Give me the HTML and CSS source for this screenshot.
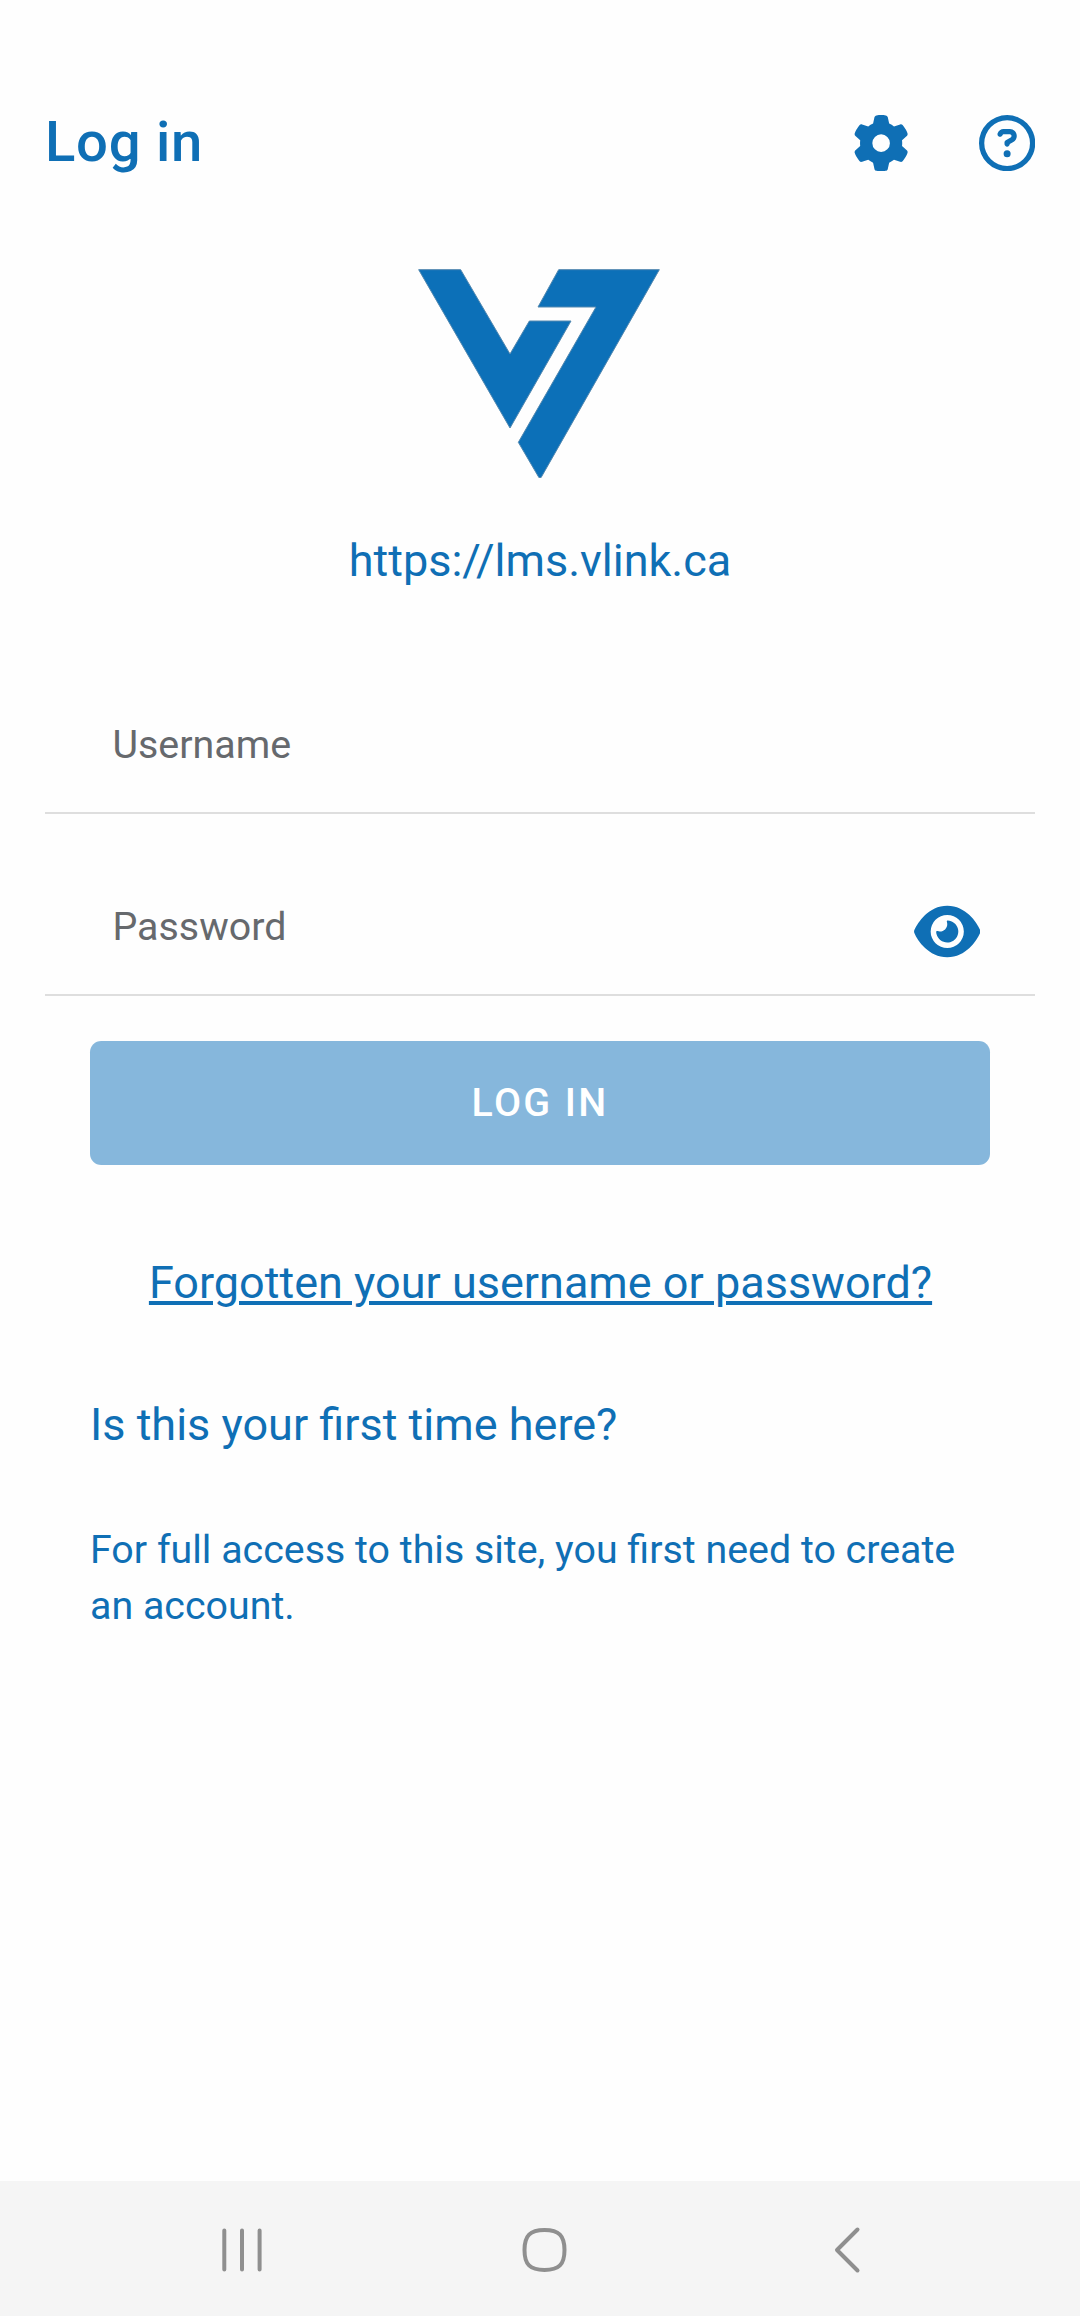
FILE: index.html
```html
<!DOCTYPE html>
<html lang="en">
<head>
<meta charset="utf-8">
<title>Log in</title>
<link rel="stylesheet" href="styles.css">
</head>
<body>
<div class="screen">
  <header class="header">
    <h1 class="title">Log in</h1>
    <div class="actions">
      <svg class="action-icon" viewBox="0 0 512 512" role="img" aria-label="Settings"><path d="M495.9 166.6c3.2 8.7 .5 18.4-6.4 24.6l-43.3 39.4c1.1 8.3 1.7 16.8 1.7 25.4s-.6 17.1-1.7 25.4l43.3 39.4c6.9 6.2 9.6 15.9 6.4 24.6c-4.4 11.9-9.7 23.3-15.8 34.3l-4.7 8.1c-6.6 11-14 21.4-22.1 31.2c-5.9 7.2-15.7 9.6-24.5 6.8l-55.7-17.7c-13.4 10.3-28.2 18.9-44 25.4l-12.5 57.1c-2 9.1-9 16.3-18.2 17.8c-13.8 2.3-28 3.5-42.5 3.5s-28.7-1.2-42.5-3.5c-9.2-1.5-16.2-8.7-18.2-17.8l-12.5-57.1c-15.8-6.5-30.6-15.1-44-25.4L83.1 425.9c-8.8 2.8-18.6 .3-24.5-6.8c-8.1-9.8-15.5-20.2-22.1-31.2l-4.7-8.1c-6.1-11-11.4-22.4-15.8-34.3c-3.2-8.7-.5-18.4 6.4-24.6l43.3-39.4C64.6 273.1 64 264.6 64 256s.6-17.1 1.7-25.4L22.4 191.2c-6.9-6.2-9.6-15.9-6.4-24.6c4.4-11.9 9.7-23.3 15.8-34.3l4.7-8.1c6.6-11 14-21.4 22.1-31.2c5.9-7.2 15.7-9.6 24.5-6.8l55.7 17.7c13.4-10.3 28.2-18.9 44-25.4l12.5-57.1c2-9.1 9-16.3 18.2-17.8C227.3 1.2 241.5 0 256 0s28.7 1.2 42.5 3.5c9.2 1.5 16.2 8.7 18.2 17.8l12.5 57.1c15.8 6.5 30.6 15.1 44 25.4l55.7-17.7c8.8-2.8 18.6-.3 24.5 6.8c8.1 9.8 15.5 20.2 22.1 31.2l4.7 8.1c6.1 11 11.4 22.4 15.8 34.3zM256 336a80 80 0 1 0 0-160 80 80 0 1 0 0 160z"/></svg>
      <svg class="action-icon" viewBox="0 0 512 512" role="img" aria-label="Help"><path d="M464 256A208 208 0 1 0 48 256a208 208 0 1 0 416 0zM0 256a256 256 0 1 1 512 0A256 256 0 1 1 0 256zm169.8-90.7c7.9-22.3 29.1-37.3 52.8-37.3h58.3c34.9 0 63.1 28.3 63.1 63.1c0 22.6-12.1 43.5-31.7 54.8L280 264.4c-.2 13-10.9 23.6-24 23.6c-13.3 0-24-10.7-24-24V250.5c0-8.6 4.6-16.5 12.1-20.8l44.3-25.4c4.7-2.7 7.6-7.7 7.6-13.1c0-8.4-6.8-15.1-15.1-15.1H222.6c-3.4 0-6.4 2.1-7.5 5.3l-.4 1.2c-4.4 12.5-18.2 19-30.6 14.6s-19-18.2-14.6-30.6l.4-1.2zM224 352a32 32 0 1 1 64 0 32 32 0 1 1 -64 0z"/></svg>
    </div>
  </header>

  <main class="content">
    <svg class="logo" viewBox="54 57 726 627" role="img" aria-label="Vlink">
      <path d="M56 59H182L330 312L388 213H513L330 534Z"/>
      <path d="M476 59H778L423 683H417L355 577L588 171H414Z"/>
    </svg>
    <p class="site-url">https://lms.vlink.ca</p>

    <form class="form">
      <div class="field"><span class="placeholder">Username</span></div>
      <div class="field">
        <span class="placeholder">Password</span>
        <svg class="eye" viewBox="0 0 576 512" role="img" aria-label="Show password"><path d="M288 32c-80.8 0-145.5 36.8-192.6 80.6C48.6 156 17.3 208 2.5 243.7c-3.3 7.9-3.3 16.7 0 24.6C17.3 304 48.6 356 95.4 399.4C142.5 443.2 207.2 480 288 480s145.5-36.8 192.6-80.6c46.8-43.5 78.1-95.4 93-131.1c3.3-7.9 3.3-16.7 0-24.6c-14.9-35.7-46.2-87.7-93-131.1C433.5 68.8 368.8 32 288 32zM144 256a144 144 0 1 1 288 0 144 144 0 1 1 -288 0zm144-64c0 35.3-28.7 64-64 64c-7.1 0-13.9-1.2-20.3-3.3c-5.5-1.8-11.9 1.6-11.7 7.4c.3 6.9 1.3 13.8 3.2 20.7c13.7 51.2 66.4 81.6 117.6 67.9s81.6-66.4 67.9-117.6c-11.1-41.5-47.8-69.4-88.6-71.1c-5.8-.2-9.2 6.1-7.4 11.7c2.1 6.4 3.3 13.2 3.3 20.3z"/></svg>
      </div>
      <button class="submit" type="button">LOG IN</button>
    </form>

    <a class="forgot">Forgotten your username or password?</a>
    <section class="signup">
      <h2 class="signup-title">Is this your first time here?</h2>
      <p class="signup-text">For full access to this site, you first need to create an account.</p>
    </section>
  </main>

  <nav class="navbar">
    <svg class="nav-icon" viewBox="0 0 48 48"><path d="M6.3 4.5V43.5M24 4.5V43.5M41.6 4.5V43.5"/></svg>
    <svg class="nav-icon" viewBox="0 0 48 48"><path d="M23.500 4C38 4 43.500 9.500 43.500 24S38 44 23.500 44S3.500 38.500 3.500 24S9 4 23.500 4Z"/></svg>
    <svg class="nav-icon" viewBox="0 0 48 48"><path d="M34.500 3.500L14 24L34.500 44.500"/></svg>
  </nav>
</div>
</body>
</html>
```
FILE: styles.css
```css
* {
  box-sizing: border-box;
}

body {
  margin: 0;
  background: #fefefe;
  color: #0f6fb5;
  font-family: Roboto, "Liberation Sans", sans-serif;
}

h1, h2, p {
  margin: 0;
  font-weight: 400;
}

svg {
  display: block;
  flex: none;
}

.screen {
  display: flex;
  flex-direction: column;
  width: 1080px;
  height: 2316px;
}

.header {
  display: flex;
  align-items: center;
  justify-content: space-between;
  height: 202px;
  padding: 84px 45px 0;
}

.title {
  padding-bottom: 2px;
  font-size: 56.25px;
  font-weight: 500;
  line-height: 68px;
  letter-spacing: 0.7px;
}

.actions {
  display: flex;
  gap: 69.5px;
}

.action-icon {
  width: 56.25px;
  height: 56.25px;
  fill: currentColor;
}

.content {
  display: flex;
  flex: 1;
  flex-direction: column;
  align-items: center;
  padding-top: 67px;
}

.logo {
  width: 242px;
  height: 209px;
  margin-right: 2px;
  fill: #0c70b8;
  stroke: #5288b0;
  stroke-width: 3;
}

.site-url {
  margin-top: 56px;
  font-size: 45px;
  line-height: 54px;
}

.form {
  display: flex;
  flex-direction: column;
  width: 990px;
  margin-top: 44px;
}

.field {
  display: flex;
  align-items: flex-start;
  justify-content: space-between;
  height: 182px;
  padding: 85px 55px 0 67.5px;
  border-bottom: 2px solid #dedede;
}

.placeholder {
  color: #66696d;
  font-size: 39.375px;
  line-height: 56px;
}

.eye {
  width: 66.5px;
  height: 59px;
  margin-top: 3px;
  fill: currentColor;
}

.submit {
  height: 124px;
  margin: 45px 45px 0;
  padding: 0 0 2px;
  border: 0;
  border-radius: 11.25px;
  background: #86b7dc;
  color: #fff;
  font-family: inherit;
  font-size: 39.375px;
  font-weight: 500;
  letter-spacing: 2.36px;
}

.forgot {
  margin-top: 91px;
  padding-left: 1px;
  font-size: 45px;
  line-height: 54px;
  text-decoration: underline;
  text-decoration-thickness: 4px;
  text-underline-offset: 3px;
}

.signup {
  width: 900px;
  margin-top: 88px;
}

.signup-title {
  font-size: 45px;
  line-height: 54px;
}

.signup-text {
  margin-top: 70px;
  font-size: 39.375px;
  line-height: 56.25px;
}

.navbar {
  display: flex;
  align-items: center;
  justify-content: space-between;
  height: 135px;
  padding: 3px 209px 0 218px;
  background: #f5f5f5;
}

.nav-icon {
  width: 48px;
  height: 48px;
  fill: none;
  stroke: #8f8f8f;
  stroke-width: 4;
  stroke-linecap: round;
  stroke-linejoin: round;
}
```
